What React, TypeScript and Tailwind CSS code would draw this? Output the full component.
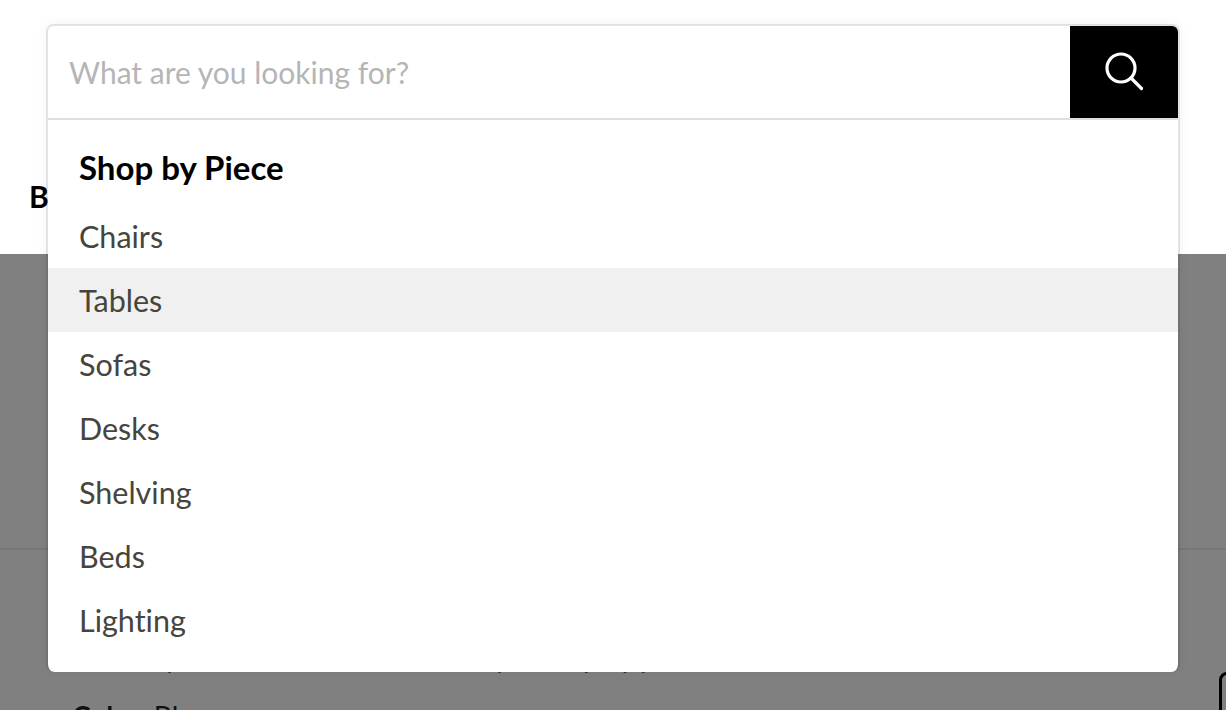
import React from 'react';

const pieces = ['Chairs', 'Tables', 'Sofas', 'Desks', 'Shelving', 'Beds', 'Lighting'];

export default function App() {
  return (
    <div className="relative h-[710px] w-[1226px] overflow-hidden bg-[#808080] font-['Lato','Noto_Sans',sans-serif] [font-variant-ligatures:none]">
      {/* page behind the overlay */}
      <div className="flex h-[254px] items-end bg-white pb-[38px] pl-[29px]">
        <span className="text-[30px] leading-[40px] font-bold text-black">B</span>
      </div>
      <div className="h-[296px] border-b-2 border-[#777777]" />
      <div className="flex flex-col gap-[19px] pl-[72px] pt-[87px] text-[28px] leading-[40px] text-[#2a2a2a]">
        <span>Made by hand from solid oak, ready to ship (qty)</span>
        <span className="font-bold text-[#111111]">
          Color: <span className="font-normal">Blue</span>
        </span>
      </div>
      <div className="absolute top-[672px] left-[1219px] h-[60px] w-[60px] rounded-lg border-[3px] border-black" />

      {/* search overlay */}
      <div className="absolute top-[24px] left-[46px] w-[1134px] rounded-lg border-x-2 border-t-2 border-black/10 bg-white bg-clip-padding shadow-[0_0_12px_rgba(0,0,0,0.05)]">
        <div className="flex h-[94px] items-stretch border-b-2 border-[#dfdfdf]">
          <div className="flex flex-1 items-center pl-[21px] text-[30px] text-[#b5b5b5]">What are you looking for?</div>
          <div className="flex w-[108px] items-center justify-center rounded-tr-md bg-black">
            <svg width="44" height="44" viewBox="0 0 44 44" fill="none" stroke="white" strokeWidth="3.2" strokeLinecap="round">
              <circle cx="19" cy="18" r="14" />
              <path d="M29 28 39.5 38.5" />
            </svg>
          </div>
        </div>
        <div className="flex h-[84px] items-center pt-[12px] pl-[31px] text-[33px] font-bold text-black">Shop by Piece</div>
        <ul className="rounded-b-lg pb-[20px]">
          {pieces.map((piece) => (
            <li
              key={piece}
              className={`flex h-[64px] items-center pt-[2px] pl-[31px] text-[30.5px] text-[#45453d] ${piece === 'Tables' ? 'bg-[#f0f0f0]' : ''}`}
            >
              {piece}
            </li>
          ))}
        </ul>
      </div>
    </div>
  );
}
